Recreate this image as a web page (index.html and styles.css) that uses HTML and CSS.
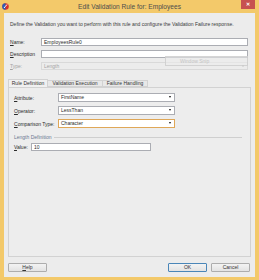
FILE: index.html
```html
<!DOCTYPE html>
<html lang="en">
  <head>
    <meta charset="UTF-8" />
    <title>Edit Validation Rule for: Employees</title>
    <link rel="stylesheet" href="styles.css">
  </head>
  <body>
    <div class="window">
      <div class="titlebar">
        <svg class="app-icon" width="7" height="7" viewBox="0 0 14 14">
          <circle cx="7" cy="7" r="6.5" fill="#d8312c" />
          <path d="M7 0.5 A6.5 6.5 0 0 0 7 13.5 Z" fill="#2a5fb8" />
          <path d="M4 10 C6 8 8 5 10 3" stroke="#fff" stroke-width="2" fill="none" />
        </svg>
        <span class="title">Edit Validation Rule for: Employees</span>
        <div class="close">&#x2715;</div>
      </div>

      <div class="client">
        <p class="intro">Define the Validation you want to perform with this rule and configure the Validation Failure response.</p>

        <div class="fields">
          <div class="row">
            <label><u>N</u>ame:</label>
            <div class="input">EmployeesRule0</div>
          </div>
          <div class="row">
            <label><u>D</u>escription</label>
            <div class="input"></div>
          </div>
          <div class="row disabled">
            <label><u>T</u>ype:</label>
            <div class="input select">Length<span class="arrow"></span></div>
          </div>
        </div>

        <div class="tabs">
          <div class="tab active">Rule Definition</div>
          <div class="tab">Validation Execution</div>
          <div class="tab">Failure Handling</div>
        </div>

        <div class="panel">
          <div class="prow">
            <label><u>A</u>ttribute:</label>
            <div class="input select">FirstName<span class="arrow"></span></div>
          </div>
          <div class="prow">
            <label><u>O</u>perator:</label>
            <div class="input select">LessThan<span class="arrow"></span></div>
          </div>
          <div class="prow">
            <label><u>C</u>omparison Type:</label>
            <div class="input select focus">Character<span class="arrow"></span></div>
          </div>

          <div class="group">
            <span>Length Definition</span>
            <div class="rule"></div>
          </div>
          <div class="prow value">
            <label><u>V</u>alue:</label>
            <div class="input">10</div>
          </div>
        </div>

        <div class="buttons">
          <div class="btn"><u>H</u>elp</div>
          <div class="spacer"></div>
          <div class="btn default">OK</div>
          <div class="btn">Cancel</div>
        </div>

        <div class="grip"></div>
      </div>

      <div class="snip">Window Snip</div>
    </div>
  </body>
</html>
```

FILE: styles.css
```css
body {
  margin: 0;
  font-family: "Liberation Sans", Arial, sans-serif;
  font-size: 5px;
  color: #2b2b2b;
}
u {
  text-decoration: underline;
}
.window {
  position: relative;
  width: 259px;
  height: 280px;
  background: #f3c96a;
  display: flex;
  flex-direction: column;
}
.titlebar {
  height: 13px;
  display: grid;
  grid-template-columns: 1fr auto 1fr;
  align-items: center;
}
.app-icon {
  margin-left: 2px;
}
.title {
  font-size: 6.6px;
  color: #4d4d4d;
}
.close {
  justify-self: end;
  align-self: start;
  width: 14px;
  height: 9px;
  margin-right: 4px;
  background: #c75150;
  color: #fff;
  font-size: 5px;
  font-weight: bold;
  line-height: 9px;
  text-align: center;
}
.client {
  position: relative;
  flex: 1;
  margin: 0 4px 3px;
  background: #ececec;
  display: flex;
  flex-direction: column;
}
.intro {
  margin: 0;
  padding: 8px 0 0 6px;
  line-height: 6px;
  color: #3a3a3a;
}
.fields {
  margin-top: 11px;
  padding: 0 7px 0 6px;
}
.row {
  display: flex;
  align-items: center;
  height: 8px;
  margin-bottom: 4px;
}
.row:last-child {
  margin-bottom: 0;
}
.row label {
  width: 31px;
}
.input {
  position: relative;
  box-sizing: border-box;
  height: 8px;
  flex: 1;
  background: #fff;
  border: 1px solid #abadb3;
  padding: 0 2px;
  line-height: 6px;
  white-space: nowrap;
}
.arrow {
  position: absolute;
  right: 3px;
  top: 2px;
  border-left: 1.5px solid transparent;
  border-right: 1.5px solid transparent;
  border-top: 2px solid #111;
}
.disabled {
  color: #a3a3a3;
}
.disabled .input {
  background: #ececec;
  border-color: #d9d9d9;
}
.disabled .arrow {
  border-top-color: #a8a8a8;
}
.tabs {
  display: flex;
  margin-top: 10px;
  padding-left: 4px;
  height: 7px;
  position: relative;
  z-index: 1;
}
.tab {
  box-sizing: border-box;
  height: 7px;
  border: 1px solid #d2d2d2;
  border-left: none;
  background: #e8e8e8;
  line-height: 5px;
  text-align: center;
  white-space: nowrap;
  color: #333;
}
.tab.active {
  width: 40px;
  height: 8px;
  margin-top: -1px;
  border-left: 1px solid #d2d2d2;
  border-bottom: none;
  background: #f0f0f0;
  line-height: 7px;
}
.tab:nth-child(2) {
  width: 55px;
}
.tab:nth-child(3) {
  width: 45px;
}
.panel {
  flex: 1;
  margin: 0 4px;
  border: 1px solid #d2d2d2;
  background: #ededed;
  padding: 5px 0 0 5px;
}
.prow {
  display: flex;
  align-items: center;
  margin-bottom: 4px;
}
.prow label {
  width: 44px;
}
.prow .input {
  flex: none;
  width: 117px;
  height: 9px;
  line-height: 7px;
}
.input.focus {
  border-color: #dfa757;
}
.group {
  display: flex;
  align-items: center;
  margin-top: 6px;
  margin-right: 8px;
  height: 6px;
  color: #6a7891;
}
.group .rule {
  flex: 1;
  margin-left: 2px;
  border-top: 1px solid #cfcfcf;
}
.prow.value {
  margin-top: 3px;
}
.prow.value label {
  width: 17px;
}
.prow.value .input {
  width: 120px;
  height: 8px;
  line-height: 6px;
}
.buttons {
  display: flex;
  gap: 4px;
  margin: 6px 5px 5px 4px;
  height: 9px;
}
.spacer {
  flex: 1;
}
.btn {
  box-sizing: border-box;
  width: 39px;
  height: 9px;
  border: 1px solid #adadad;
  border-radius: 1px;
  background: linear-gradient(#f3f3f3, #e3e3e3);
  line-height: 7px;
  text-align: center;
  color: #333;
}
.btn.default {
  border-color: #4a86b8;
}
.grip {
  position: absolute;
  right: 0;
  bottom: 0;
  width: 3px;
  height: 3px;
  background: radial-gradient(circle, #b5b5b5 30%, transparent 40%) 0 0 / 1.5px 1.5px;
}
.snip {
  position: absolute;
  left: 165px;
  top: 56px;
  width: 83px;
  height: 10px;
  box-sizing: border-box;
  border: 1px solid rgba(200, 200, 200, 0.7);
  background: rgba(236, 236, 236, 0.55);
  padding-left: 14px;
  line-height: 8px;
  color: #c4c4c4;
}
```
